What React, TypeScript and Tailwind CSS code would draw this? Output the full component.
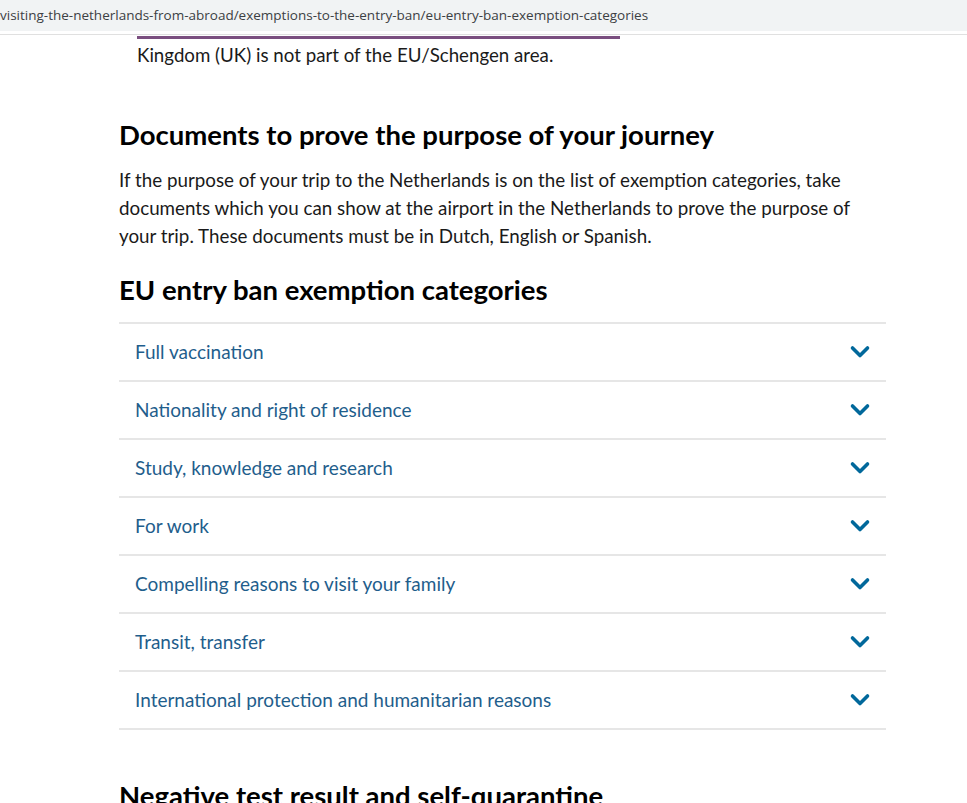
import React from 'react';

const categories = [
  'Full vaccination',
  'Nationality and right of residence',
  'Study, knowledge and research',
  'For work',
  'Compelling reasons to visit your family',
  'Transit, transfer',
  'International protection and humanitarian reasons',
];

const Chevron = () => (
  <svg width="22" height="14" viewBox="0 0 22 14" fill="none" className="shrink-0">
    <path d="M3.5 3l7.5 7.5 7.5-7.5" stroke="#01689b" strokeWidth="3.6" strokeLinecap="round" strokeLinejoin="round" />
  </svg>
);

const App: React.FC = () => {
  return (
    <div className="min-h-screen bg-white overflow-hidden" style={{ fontFamily: 'Lato, "Noto Sans", sans-serif' }}>
      {/* address bar strip */}
      <div className="h-[31px] bg-[#f1f3f4] flex items-center">
        <span className="text-[13.5px] text-[#3c4043] whitespace-nowrap" style={{ fontFamily: '"Open Sans", sans-serif' }}>
          visiting-the-netherlands-from-abroad/exemptions-to-the-entry-ban/eu-entry-ban-exemption-categories
        </span>
      </div>
      <div className="h-[3px]" />
      <div className="h-[2px] border-t border-[#e0e0e0]" />

      <main className="pl-[119px] w-[886px]">
        {/* tail of the previous notice */}
        <div className="pl-[18px]">
          <div className="h-[3px] w-[483px] bg-[#7b4f80]" />
          <p className="text-[18.7px] leading-[28px] text-[#1a1a1a] mt-[2px]">Kingdom (UK) is not part of the EU/Schengen area.</p>
        </div>

        <h2 className="mt-[50px] text-[27.5px] leading-[32px] font-bold text-black">Documents to prove the purpose of your journey</h2>
        <p className="mt-[15px] text-[18.8px] leading-[28px] text-[#1a1a1a] w-[740px]">
          If the purpose of your trip to the Netherlands is on the list of exemption categories, take documents which you can show at the airport in the Netherlands to prove the purpose of your trip. These documents must be in Dutch, English or Spanish.
        </p>

        <h2 className="mt-[24px] text-[27.5px] leading-[32px] font-bold text-black">EU entry ban exemption categories</h2>

        <ul className="mt-[16px] border-t-2 border-[#e6e6e6]">
          {categories.map((c) => (
            <li key={c} className="h-[58px] border-b-2 border-[#e6e6e6] flex items-center justify-between pl-[16px] pr-[15px]">
              <span className="text-[19px] text-[#1f5e8c]">{c}</span>
              <Chevron />
            </li>
          ))}
        </ul>

        <h2 className="mt-[50px] text-[27.5px] leading-[32px] font-bold text-black whitespace-nowrap">Negative test result and self-quarantine</h2>
      </main>
    </div>
  );
};

export default App;
